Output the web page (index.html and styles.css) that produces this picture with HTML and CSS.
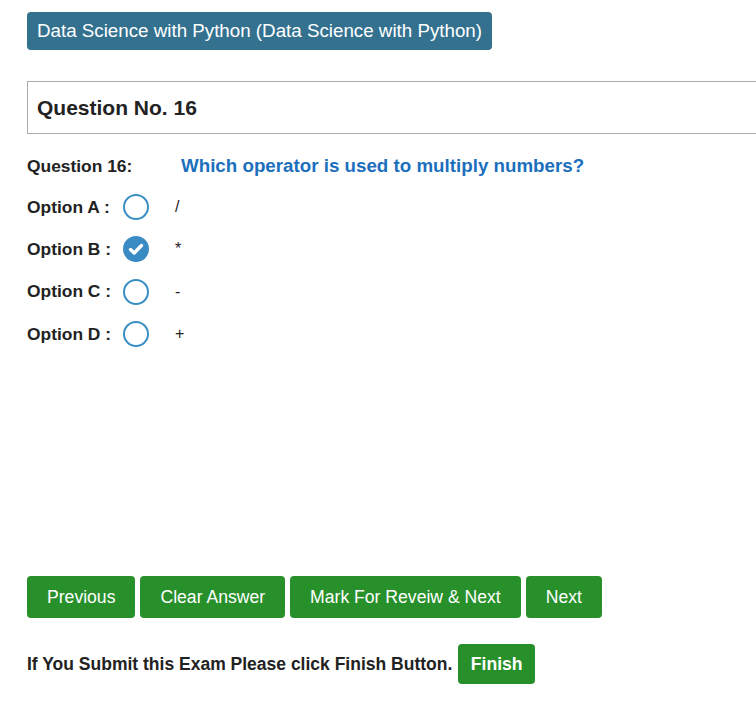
FILE: index.html
```html
<!DOCTYPE html>
<html>
<head>
<meta charset="utf-8">
<link rel="stylesheet" href="styles.css">
</head>
<body>
<main class="page">
  <div class="badge">Data Science with Python (Data Science with Python)</div>
  <div class="qbox">Question No. 16</div>
  <div class="qrow">
    <span class="qlabel">Question 16:</span>
    <span class="qtext">Which operator is used to multiply numbers?</span>
  </div>
  <div class="options">
    <div class="opt"><span class="olabel">Option A :</span><span class="radio"></span><span class="oval">/</span></div>
    <div class="opt"><span class="olabel">Option B :</span><span class="radio checked"><svg viewBox="0 0 26 26" width="26" height="26"><circle cx="13" cy="13" r="13" fill="#3a8ac4"/><path d="M7.5 13.5 L11.2 17 L18.5 9.5" fill="none" stroke="#fff" stroke-width="3.4" stroke-linecap="round" stroke-linejoin="round"/></svg></span><span class="oval">*</span></div>
    <div class="opt"><span class="olabel">Option C :</span><span class="radio"></span><span class="oval">-</span></div>
    <div class="opt"><span class="olabel">Option D :</span><span class="radio"></span><span class="oval">+</span></div>
  </div>
  <div class="actions">
    <button class="btn">Previous</button>
    <button class="btn">Clear Answer</button>
    <button class="btn">Mark For Reveiw &amp; Next</button>
    <button class="btn">Next</button>
  </div>
  <div class="finish">
    <span class="ftext">If You Submit this Exam Please click Finish Button.</span>
    <button class="btn fbtn">Finish</button>
  </div>
</main>
</body>
</html>
```

FILE: styles.css
```css
html, body {
  margin: 0;
  padding: 0;
  background: #fff;
  font-family: "Liberation Sans", Arial, sans-serif;
  color: #333;
}
.page {
  display: flex;
  flex-direction: column;
  align-items: flex-start;
  padding: 12px 0 0 27px;
}
.badge {
  background: #33718f;
  color: #fff;
  font-size: 18.75px;
  line-height: 38px;
  height: 38px;
  padding: 0 10px;
  border-radius: 4px;
}
.qbox {
  margin-top: 31px;
  align-self: stretch;
  box-sizing: border-box;
  height: 53px;
  border: 1px solid #aaa;
  border-right: 0;
  padding-left: 9px;
  font-size: 21px;
  font-weight: bold;
  line-height: 51px;
  color: #222;
}
.qrow {
  margin-top: 21px;
  display: flex;
  align-items: center;
  height: 22px;
}
.qlabel {
  width: 154px;
  font-size: 17.4px;
  font-weight: bold;
  color: #222;
}
.qtext {
  font-size: 18.75px;
  font-weight: bold;
  color: #1c6fbd;
}
.options {
  display: flex;
  flex-direction: column;
  margin-top: 9px;
}
.opt {
  display: flex;
  align-items: center;
  height: 42.3px;
}
.olabel {
  width: 96px;
  font-size: 17.4px;
  font-weight: bold;
  color: #222;
}
.radio {
  box-sizing: border-box;
  width: 26px;
  height: 26px;
  border: 2px solid #3a8ec4;
  border-radius: 50%;
  display: block;
}
.radio.checked {
  border: 0;
}
.radio svg { display: block; }
.oval {
  margin-left: 26px;
  font-size: 16px;
  color: #222;
}
.actions {
  margin-top: 221px;
  display: flex;
  gap: 5px;
}
.btn {
  font-family: "Liberation Sans", Arial, sans-serif;
  background: #28902b;
  color: #fff;
  border: 0;
  border-radius: 4px;
  height: 42px;
  padding: 0 20px;
  font-size: 17.6px;
}
.finish {
  margin-top: 26px;
  display: flex;
  align-items: center;
  gap: 6px;
}
.ftext {
  font-size: 17.5px;
  font-weight: bold;
  color: #222;
}
.fbtn {
  height: 40px;
  padding: 0 12.5px;
  font-weight: bold;
  font-size: 17.6px;
}
```
